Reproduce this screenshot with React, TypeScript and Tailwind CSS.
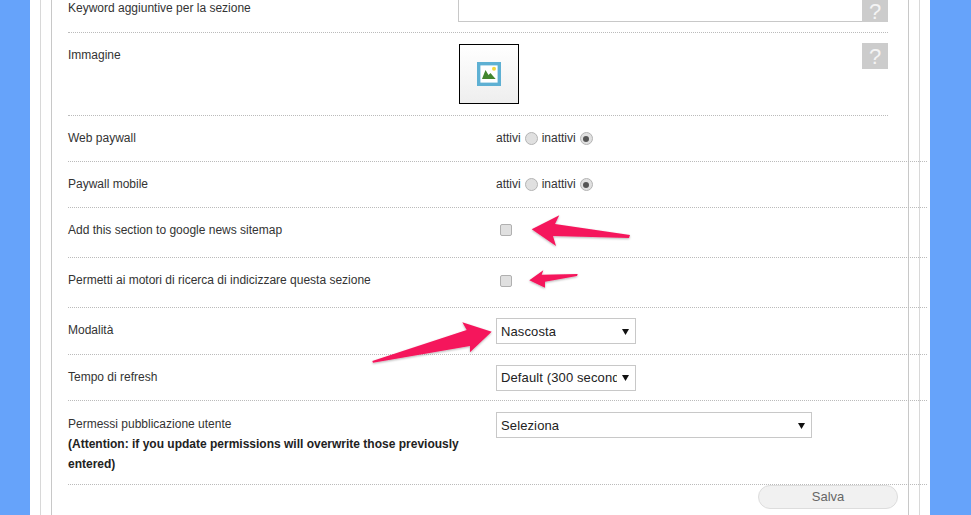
const ROW = "flex border-b border-dotted border-[#bbbbbb]";
const WIDE = "flex border-b border-dotted border-[#bbbbbb] -mr-[39px]";

function HelpBox({ className }: { className: string }) {
  return (
    <div className={`flex w-[26px] shrink-0 items-center justify-center bg-[#cccccc] text-[22px] text-[#f4f4f4] ${className}`}>?</div>
  );
}

function Radio({ checked }: { checked?: boolean }) {
  return (
    <span className="mx-[4px] flex h-[13px] w-[13px] items-center justify-center rounded-full border border-[#b4b4b4] bg-[#e0e0e0]">
      {checked && <span className="h-[6px] w-[6px] rounded-full bg-[#555555]" />}
    </span>
  );
}

function PaywallRow({ label, height }: { label: string; height: string }) {
  return (
    <div className={`${WIDE} ${height} items-center`}>
      <div className="w-[428px] pb-[2px]">{label}</div>
      <div className="flex items-center">
        <span className="pb-[2px]">attivi</span>
        <Radio />
        <span className="pb-[2px]">inattivi</span>
        <Radio checked />
      </div>
    </div>
  );
}

function CheckRow({ label, height, boxClass }: { label: string; height: string; boxClass: string }) {
  return (
    <div className={`${WIDE} ${height} items-center`}>
      <div className="w-[432px] pb-[6px]">{label}</div>
      <span className={`h-[12px] w-[12px] rounded-[2px] border border-[#b0b0b0] bg-[#e0e0e0] ${boxClass}`} />
    </div>
  );
}

function Select({ value, className }: { value: string; className: string }) {
  return (
    <div className={`flex h-[26px] items-center justify-between border border-[#c8c8c8] bg-white pl-[4px] pr-[6px] text-[13px] tracking-[0.12px] text-[#222222] ${className}`}>
      <span className="overflow-hidden whitespace-nowrap pt-[1px]">{value}</span>
      <svg width="7" height="7" viewBox="0 0 7 7" className="ml-[5px] shrink-0">
        <path d="M0 1h7L3.5 7z" fill="#111111" />
      </svg>
    </div>
  );
}

export default function App() {
  return (
    <div className="relative flex h-[515px] w-[971px] overflow-hidden bg-[#66a3fa] pl-[30px] pr-[41px] font-['Liberation_Sans',Arial,sans-serif] text-[12px] text-[#333333]">
      <div className="flex-1 bg-white pl-[10px] pr-[10px]">
        <div className="h-full border-x border-[#d8d8d8] pl-[10px] pr-[10px]">
          <div className="h-full border-x border-[#c8c8c8] pl-[16px] pr-[20px]">
            {/* chiavi */}
            <div className={`${ROW} h-[33px]`}>
              <div className="-mt-[1px] w-[390px]">Keyword aggiuntive per la sezione</div>
              <div className="mb-[10px] flex-1 border-x border-b border-[#c8c8c8] bg-white" />
              <HelpBox className="mb-[10px] -ml-[1px]" />
            </div>
            {/* immagine */}
            <div className={`${ROW} h-[83px] items-start`}>
              <div className="w-[391px] pt-[13px]">Immagine</div>
              <div className="mt-[11px] flex h-[60px] w-[60px] items-center justify-center border border-black bg-gradient-to-b from-white to-[#eeeeee]">
                <svg width="24" height="24" viewBox="0 0 24 24">
                  <rect width="24" height="24" fill="#5eb0d3" />
                  <rect x="3.4" y="3.4" width="17.2" height="17.2" fill="#ffffff" />
                  <circle cx="17" cy="6.8" r="2" fill="#f2d83f" />
                  <path d="M5 17L8.5 8l3 5 2-2 2.5 3 2.7 3z" fill="#43862f" />
                </svg>
              </div>
              <div className="flex-1" />
              <HelpBox className="mt-[10px] h-[26px]" />
            </div>
            <PaywallRow label="Web paywall" height="h-[46px]" />
            <PaywallRow label="Paywall mobile" height="h-[46px]" />
            <CheckRow label="Add this section to google news sitemap" height="h-[50px]" boxClass="mb-[6px]" />
            <CheckRow label="Permetti ai motori di ricerca di indicizzare questa sezione" height="h-[50px]" boxClass="mb-[4px]" />
            <div className={`${WIDE} h-[47px] items-center`}>
              <div className="w-[428px] pb-[2px]">Modalità</div>
              <Select value="Nascosta" className="w-[140px]" />
            </div>
            <div className={`${WIDE} h-[46px] items-center`}>
              <div className="w-[428px] pb-[2px]">Tempo di refresh</div>
              <Select value="Default (300 secondi)" className="w-[140px]" />
            </div>
            <div className={`${WIDE} h-[84px] items-start`}>
              <div className="w-[428px] pt-[13px] leading-[20px]">
                Permessi pubblicazione utente
                <br />
                <b className="text-[#222222]">(Attention: if you update permissions will overwrite those previously entered)</b>
              </div>
              <Select value="Seleziona" className="mt-[11px] w-[316px]" />
            </div>
            <div className="flex justify-end -mr-[10px]">
              <button className="h-[24px] w-[140px] rounded-[12px] border border-[#dddddd] bg-[#f1f1f1] text-[13px] text-[#666666]">Salva</button>
            </div>
          </div>
        </div>
      </div>

      {/* frecce */}
      <svg width="971" height="515" className="pointer-events-none absolute left-0 top-0">
        <defs>
          <filter id="ombra" x="-20%" y="-40%" width="140%" height="180%">
            <feDropShadow dx="0" dy="1" stdDeviation="1" floodColor="#000000" floodOpacity="0.3" />
          </filter>
        </defs>
        <g fill="#f5175c" filter="url(#ombra)">
          <path d="M531.7 229.3L559.3 215.3 555 224 630 235 629 238 553 236 556 246z" />
          <path d="M529.3 280.3L543.3 270.3 541.7 274.7 577.7 274 577 276 545 281.7 545 287.7z" />
          <path d="M491.7 331.7L462.3 322.3 466.7 330 372.3 361 373 362.7 470 346 470 352.3z" />
        </g>
      </svg>
    </div>
  );
}
